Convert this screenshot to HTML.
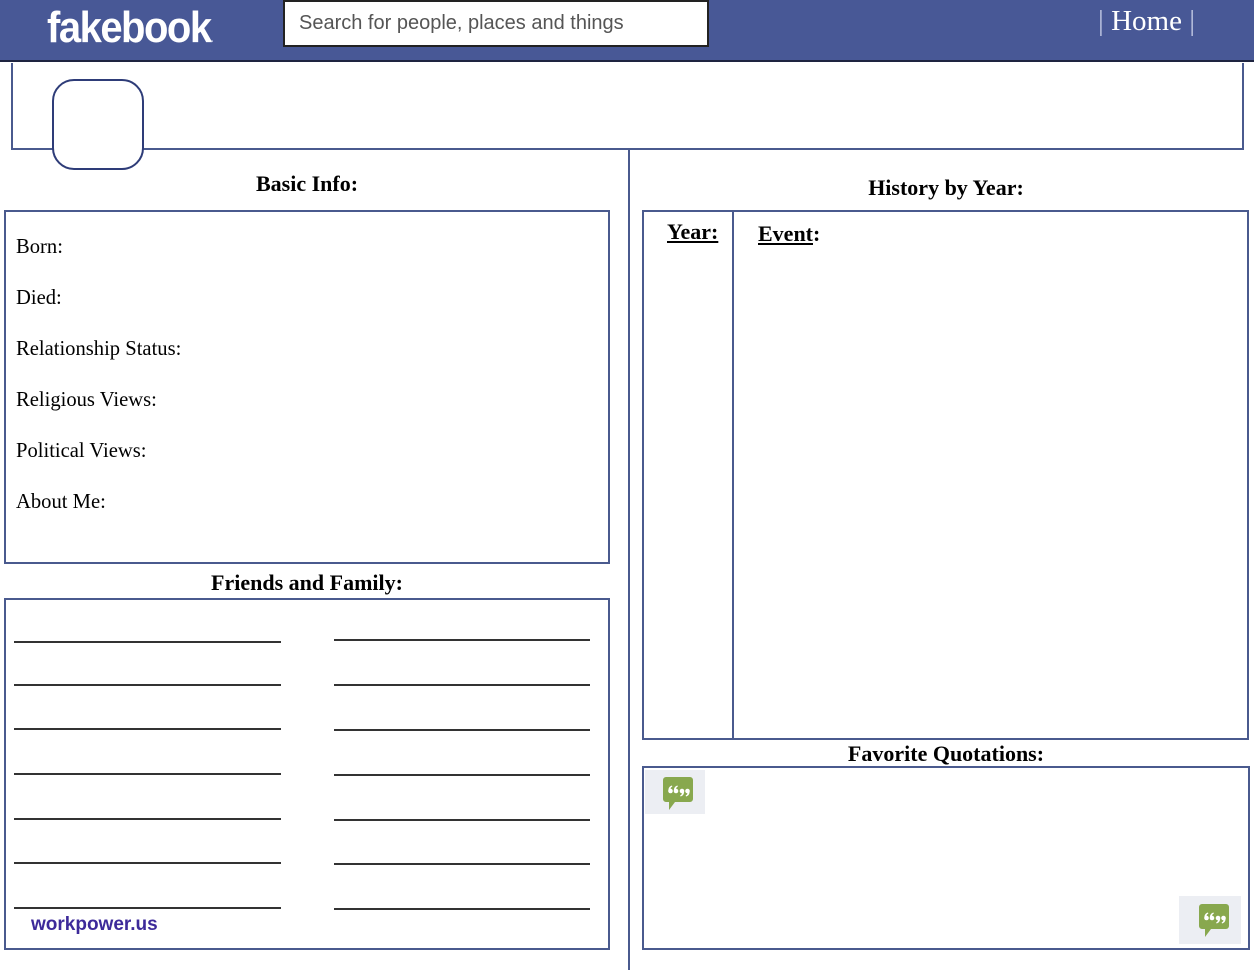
<!DOCTYPE html>
<html><head><meta charset="utf-8"><style>
*{margin:0;padding:0;box-sizing:border-box}
body{width:1254px;height:970px;background:#fff;position:relative;overflow:hidden;font-family:"Liberation Serif",serif;color:#000}
.a{position:absolute}
.box{position:absolute;border:2px solid #4a5a8e}
.h{position:absolute;font-weight:bold;font-size:22px;text-align:center}
.lbl{position:absolute;left:16px;font-size:20.6px}
.ln{position:absolute;height:2px;background:#333}
.q{position:absolute;width:60px;height:44px;background:#eceef3}
</style></head><body>
<svg width="0" height="0" style="position:absolute"><defs>
<symbol id="qi" viewBox="0 0 30 34">
<path d="M3 0h24a3 3 0 0 1 3 3v19a3 3 0 0 1-3 3H12l-6 8v-8H3a3 3 0 0 1-3-3V3a3 3 0 0 1 3-3z" fill="#88a84e"/>
<g fill="#fff">
<circle cx="7.5" cy="14" r="2.3"/><path d="M5.4 13.5 C5.4 10.5 7 9 9 8.5 L9.3 9.6 C8 10.2 7.4 11.2 7.6 12.5z"/>
<circle cx="13" cy="14" r="2.3"/><path d="M10.9 13.5 C10.9 10.5 12.5 9 14.5 8.5 L14.8 9.6 C13.5 10.2 12.9 11.2 13.1 12.5z"/>
<circle cx="19" cy="14" r="2.3"/><path d="M21.1 14.5 C21.1 17.5 19.5 19 17.5 19.5 L17.2 18.4 C18.5 17.8 19.1 16.8 18.9 15.5z"/>
<circle cx="24.5" cy="14" r="2.3"/><path d="M26.6 14.5 C26.6 17.5 25 19 23 19.5 L22.7 18.4 C24 17.8 24.6 16.8 24.4 15.5z"/>
</g></symbol></defs></svg>
<div class="a" style="left:0;top:0;width:1254px;height:62px;background:#485896;border-bottom:2px solid #1e2440"></div>
<div class="a" style="left:47px;top:0px;font-family:'Liberation Sans',sans-serif;font-weight:bold;font-size:40px;line-height:50px;color:#fff;letter-spacing:-1.5px;transform:scaleY(1.1);transform-origin:top left">fakebook<span style="font-size:10px;color:#c8d0e8">.</span></div>
<div class="a" style="left:283px;top:0;width:426px;height:47px;background:#fff;border:2px solid #222;font-family:'Liberation Sans',sans-serif;font-size:20px;color:#555;padding:10px 0 0 14px">Search for people, places and things</div>
<div class="a" style="left:1098px;top:5px;font-size:29px;color:#fff"><span style="color:#bcc4e0">|</span> Home <span style="color:#bcc4e0">|</span></div>
<div class="box" style="left:11px;top:63px;width:1233px;height:87px;border-top:none"></div>
<div class="a" style="left:52px;top:79px;width:92px;height:91px;border:2px solid #2e3c78;border-radius:22px;background:#fff"></div>
<div class="a" style="left:628px;top:150px;width:2px;height:820px;background:#4a5a8e"></div>
<div class="h" style="left:0;top:171px;width:614px">Basic Info:</div>
<div class="box" style="left:4px;top:210px;width:606px;height:354px"></div>
<div class="lbl" style="top:236px">Born:</div>
<div class="lbl" style="top:287px">Died:</div>
<div class="lbl" style="top:338px">Relationship Status:</div>
<div class="lbl" style="top:389px">Religious Views:</div>
<div class="lbl" style="top:440px">Political Views:</div>
<div class="lbl" style="top:491px">About Me:</div>
<div class="h" style="left:0;top:570px;width:614px">Friends and Family:</div>
<div class="box" style="left:4px;top:598px;width:606px;height:352px"></div>
<div class="ln" style="left:14px;top:641px;width:267px"></div><div class="ln" style="left:334px;top:639px;width:256px"></div>
<div class="ln" style="left:14px;top:684px;width:267px"></div><div class="ln" style="left:334px;top:684px;width:256px"></div>
<div class="ln" style="left:14px;top:728px;width:267px"></div><div class="ln" style="left:334px;top:729px;width:256px"></div>
<div class="ln" style="left:14px;top:773px;width:267px"></div><div class="ln" style="left:334px;top:774px;width:256px"></div>
<div class="ln" style="left:14px;top:818px;width:267px"></div><div class="ln" style="left:334px;top:819px;width:256px"></div>
<div class="ln" style="left:14px;top:862px;width:267px"></div><div class="ln" style="left:334px;top:863px;width:256px"></div>
<div class="ln" style="left:14px;top:907px;width:267px"></div><div class="ln" style="left:334px;top:908px;width:256px"></div>
<div class="a" style="left:31px;top:914px;font-family:'Liberation Sans',sans-serif;font-weight:bold;font-size:19px;color:#3d2a9a">workpower.us</div>
<div class="h" style="left:640px;top:175px;width:612px">History by Year:</div>
<div class="box" style="left:642px;top:210px;width:607px;height:530px"></div>
<div class="a" style="left:732px;top:211px;width:2px;height:529px;background:#4a5a8e"></div>
<div class="a" style="left:667px;top:219px;font-size:22px;font-weight:bold;text-decoration:underline">Year:</div>
<div class="a" style="left:758px;top:221px;font-size:22px;font-weight:bold"><u>Event</u>:</div>
<div class="h" style="left:640px;top:741px;width:612px">Favorite Quotations:</div>
<div class="box" style="left:642px;top:766px;width:608px;height:184px"></div>
<div class="q" style="left:645px;top:770px"></div>
<div class="q" style="left:1179px;top:896px;width:62px;height:48px"></div>
<svg class="a" style="left:663px;top:777px" width="30" height="34"><use href="#qi"/></svg>
<svg class="a" style="left:1199px;top:904px" width="30" height="34"><use href="#qi"/></svg>
</body></html>
